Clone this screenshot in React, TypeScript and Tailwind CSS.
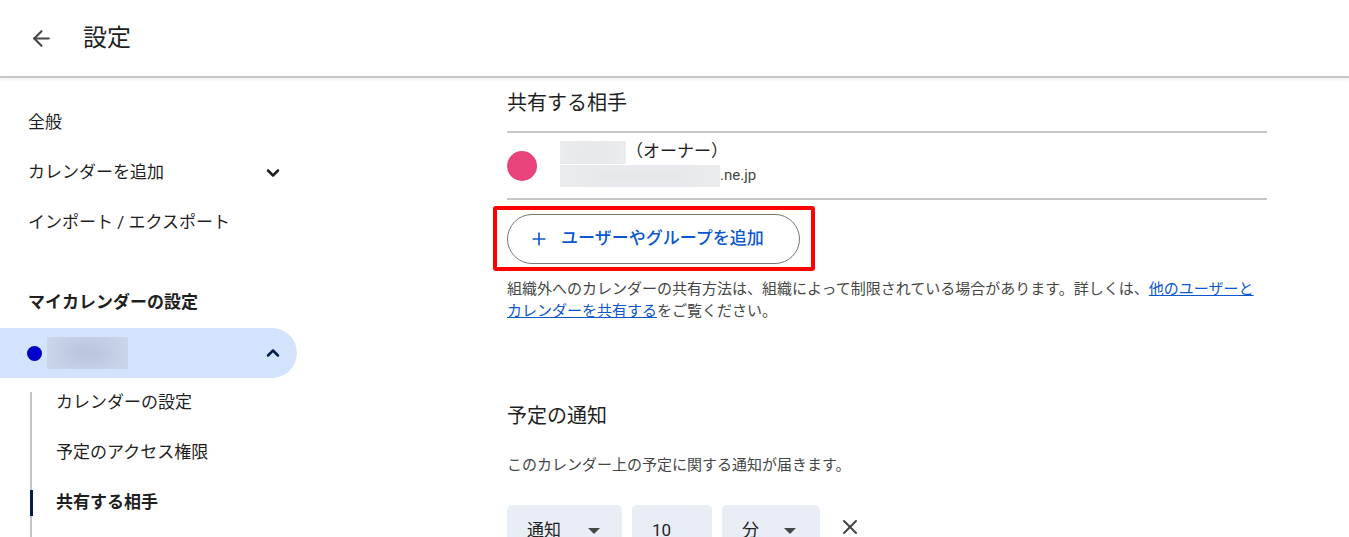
import { ArrowLeft, ChevronDown, ChevronUp, Plus, X } from "lucide-react";

const jp = "font-['Roboto','Noto_Sans_CJK_JP',sans-serif]";

function NavItem({ label, chevron }: { label: string; chevron?: boolean }) {
  return (
    <div className="h-[50px] flex items-center justify-between pl-7 pr-[14px] text-[17px] text-[#1f1f1f]">
      <span>{label}</span>
      {chevron && <ChevronDown className="w-5 h-5 text-[#1f1f1f]" strokeWidth={3} />}
    </div>
  );
}

function SubItem({ label, active }: { label: string; active?: boolean }) {
  return (
    <div className="h-[50px] flex items-center relative pl-[26px] text-[17px] text-[#1f1f1f]">
      {active && <div className="absolute left-0 top-[12px] w-[3px] h-[26px] bg-[#041e49]" />}
      <span className={active ? "font-bold" : ""}>{label}</span>
    </div>
  );
}

function Redacted({ className }: { className: string }) {
  return (
    <span className={"inline-block bg-[#eceef0] relative overflow-hidden " + className}>
      <span className="absolute inset-2 bg-[#d5d7da] blur-md rounded-full" />
    </span>
  );
}

export default function App() {
  return (
    <div className={`w-[1349px] h-[537px] overflow-hidden bg-white ${jp}`}>
      {/* Header */}
      <header className="h-[78px] flex items-center border-b-2 border-[#c7c7c7] shadow-[0_2px_3px_rgba(0,0,0,0.06)]">
        <ArrowLeft className="ml-[29px] w-[25px] h-[25px] text-[#444746]" strokeWidth={2} />
        <h1 className="ml-[29px] text-[24px] text-[#1f1f1f]">設定</h1>
      </header>

      <div className="flex">
        {/* Sidebar */}
        <aside className="w-[297px] shrink-0 pt-[20px]">
          <NavItem label="全般" />
          <NavItem label="カレンダーを追加" chevron />
          <NavItem label="インポート / エクスポート" />
          <div className="h-[30px]" />
          <div className="h-[50px] flex items-center pl-7 text-[17px] font-bold text-[#1f1f1f]">
            マイカレンダーの設定
          </div>
          <div className="h-[50px] flex items-center justify-between bg-[#d3e3fd] rounded-r-full pl-[27px] pr-[14px]">
            <div className="flex items-center gap-[5px]">
              <span className="w-[15px] h-[15px] rounded-full bg-[#0000cc]" />
              <span className="w-[81px] h-[32px] bg-[#cbd7eb] relative overflow-hidden">
                <span className="absolute inset-x-3 inset-y-2 bg-[#a9b8d2] blur-md rounded-full" />
              </span>
            </div>
            <ChevronUp className="w-5 h-5 text-[#041e49]" strokeWidth={3} />
          </div>
          <div className="ml-[30px] relative">
            <div className="absolute left-0 top-[14px] bottom-0 w-[2px] bg-[#c4c4c4]" />
            <SubItem label="カレンダーの設定" />
            <SubItem label="予定のアクセス権限" />
            <SubItem label="共有する相手" active />
            <div className="h-[50px]" />
          </div>
        </aside>

        {/* Main */}
        <main className="flex-1 pl-[210px]">
          <div className="w-[760px]">
            <h2 className="h-[53px] pb-[4px] text-[20px] text-[#1f1f1f] flex items-center">共有する相手</h2>
            <div className="border-t-2 border-[#c7c7c7] border-b-2 h-[69px] flex items-center">
              <span className="w-[30px] h-[30px] rounded-full bg-[#e8437a]" />
              <div className="ml-[23px] flex flex-col leading-tight -mt-[4px]">
                <div className="flex items-center text-[17px] text-[#1f1f1f]">
                  <Redacted className="w-[66px] h-[23px]" />
                  <span>（オーナー）</span>
                </div>
                <div className="flex items-center text-[15px] text-[#444746] mt-[1px]">
                  <Redacted className="w-[160px] h-[22px]" />
                  <span>.ne.jp</span>
                </div>
              </div>
            </div>

            <div className="mt-[6px] ml-[-14px] w-[322px] h-[65px] border-4 border-[#ff0000] rounded-[3px] flex items-center pl-[10px]">
              <button className="h-[50px] w-[293px] rounded-full border border-[#747775] flex items-center pl-[21px] gap-[12px] text-[#0b57d0] text-[17px] font-medium">
                <Plus className="w-[20px] h-[20px]" strokeWidth={2} />
                ユーザーやグループを追加
              </button>
            </div>

            <p className="mt-[7px] text-[15px] leading-[22px] text-[#444746]">
              組織外へのカレンダーの共有方法は、組織によって制限されている場合があります。詳しくは、
              <a className="text-[#0b57d0] underline">他のユーザーと<br />カレンダーを共有する</a>
              をご覧ください。
            </p>

            <h2 className="mt-[79px] text-[20px] text-[#1f1f1f]">予定の通知</h2>
            <p className="mt-[23px] text-[15px] text-[#444746]">このカレンダー上の予定に関する通知が届きます。</p>

            <div className="mt-[28px] flex items-start gap-[10px]">
              <div className="w-[115px] h-[48px] bg-[#e9eef6] rounded-t-[5px] flex items-center justify-between pl-[20px] pr-[22px] pt-[4px] text-[17px] text-[#1f1f1f]">
                <span>通知</span>
                <span className="w-0 h-0 border-l-[6px] border-r-[6px] border-t-[6px] border-l-transparent border-r-transparent border-t-[#444746]" />
              </div>
              <div className="w-[80px] h-[48px] bg-[#e9eef6] rounded-t-[5px] flex items-center pl-[20px] pt-[4px] text-[17px] text-[#1f1f1f]">
                10
              </div>
              <div className="w-[98px] h-[48px] bg-[#e9eef6] rounded-t-[5px] flex items-center justify-between pl-[20px] pr-[24px] pt-[4px] text-[17px] text-[#1f1f1f]">
                <span>分</span>
                <span className="w-0 h-0 border-l-[6px] border-r-[6px] border-t-[6px] border-l-transparent border-r-transparent border-t-[#444746]" />
              </div>
              <X className="ml-[8px] mt-[10px] w-[24px] h-[24px] text-[#444746]" strokeWidth={2} />
            </div>
          </div>
        </main>
      </div>
    </div>
  );
}
